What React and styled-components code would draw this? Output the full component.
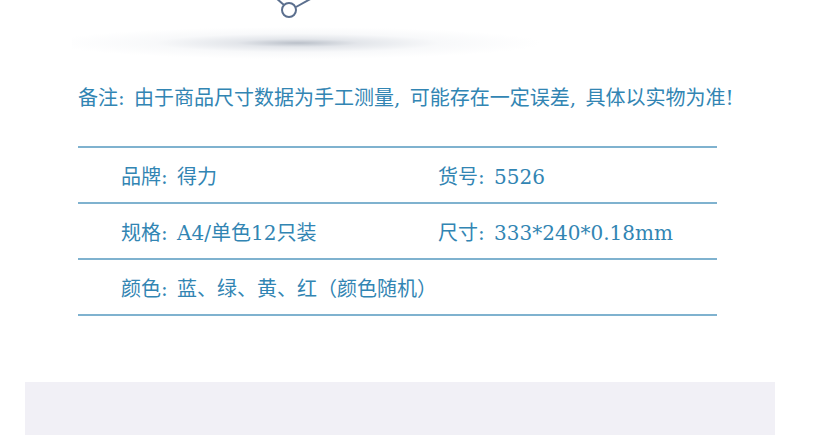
import React from 'react';
import styled, { createGlobalStyle } from 'styled-components';

const GlobalStyle = createGlobalStyle`
	body {
		margin: 0;
		background: #fff;
	}
`;

const Page = styled.div`
	width: 840px;
	height: 435px;
	overflow: hidden;
	background: #fff;
	font-family: 'DejaVu Serif', 'Noto Sans CJK SC', serif;
	color: #3285b3;
	word-spacing: 3px;
`;

const Top = styled.div`
	display: flex;
	flex-direction: column;
	height: 70px;
`;

const IconRow = styled.div`
	display: flex;
	padding-left: 272px;
	height: 20px;
`;

const Shadow = styled.div`
	margin: 7px 0 0 72px;
	width: 490px;
	height: 32px;
	background: radial-gradient(
		ellipse 50% 50% at 46% 50%,
		rgba(140, 150, 165, 0.6) 0%,
		rgba(175, 183, 196, 0.35) 25%,
		rgba(215, 220, 228, 0.18) 58%,
		rgba(255, 255, 255, 0) 100%
	);
`;

const Note = styled.p`
	margin: 13px 0 0;
	padding-left: 78px;
	font-size: 20px;
	line-height: 30px;
`;

const Table = styled.div`
	margin: 33px 0 0 78px;
	width: 639px;
	border-top: 2px solid #7fb2cf;
`;

const Row = styled.div`
	display: grid;
	grid-template-columns: 317px 1fr;
	align-items: center;
	height: 54px;
	padding-left: 43px;
	border-bottom: 2px solid #7fb2cf;
	font-size: 20px;
`;

const Cell = styled.span`
	white-space: nowrap;
`;

const Panel = styled.div`
	margin: 66px 0 0 25px;
	width: 750px;
	height: 60px;
	background: #f1f0f6;
`;

const rows = [
	['品牌: 得力', '货号: 5526'],
	['规格: A4/单色12只装', '尺寸: 333*240*0.18mm'],
	['颜色: 蓝、绿、黄、红（颜色随机）', ''],
];

const App = () => {
	return (
		<Page>
			<GlobalStyle />
			<Top>
				<IconRow>
					<svg width="50" height="20" viewBox="0 0 50 20">
						<line x1="4" y1="-2" x2="12" y2="5" stroke="#5b6f8e" strokeWidth="2" />
						<line x1="24" y1="7" x2="42" y2="-3" stroke="#5b6f8e" strokeWidth="2" />
						<circle cx="17" cy="10" r="7" fill="none" stroke="#5b6f8e" strokeWidth="2" />
					</svg>
				</IconRow>
				<Shadow />
			</Top>
			<Note>备注: 由于商品尺寸数据为手工测量, 可能存在一定误差, 具体以实物为准!</Note>
			<Table>
				{rows.map(([a, b], i) => (
					<Row key={i}>
						<Cell>{a}</Cell>
						<Cell>{b}</Cell>
					</Row>
				))}
			</Table>
			<Panel />
		</Page>
	);
};

export default App;
